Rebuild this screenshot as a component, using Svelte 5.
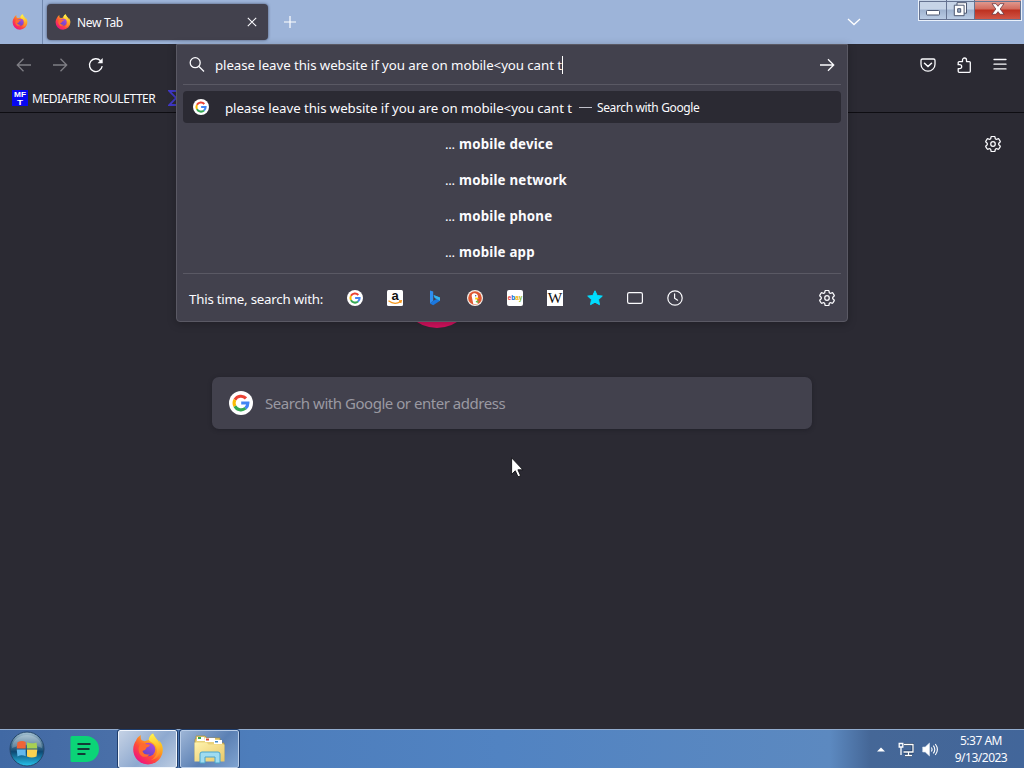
<script>
  let query = $state('please leave this website if you are on mobile<you cant t')

  const suggestions = ['mobile device', 'mobile network', 'mobile phone', 'mobile app']
  const engines = ['google', 'amazon', 'bing', 'duckduckgo', 'ebay', 'wikipedia', 'bookmarks', 'tabs', 'history']
</script>

{#snippet firefox(size)}
  <svg width={size} height={size} viewBox="0 0 32 32" aria-hidden="true">
    <path d="M29.8 11.4c-.8-1.8-2.1-3.4-3.5-4.2 1 1.800 1.300 2.700 1.400 3.900C25.900 6.800 22.900 5 21 .4c-2.800 1.500-4 4.300-4.200 6.500-1.500.1-2.800.6-4 1.300L9.700 7.300C8.700 6.200 8.500 3.700 8.900 2 5.800 3.700 4.700 6.100 4.100 7.600 2.500 9.700 1.200 13 1.200 16.500a14.800 14.800 0 0 0 29.600.2c0-2-.3-3.800-1-5.300Z" fill="url(#ff-flame)"/>
    <path d="M21 .4c2 5.300 7.200 7.600 7.800 14.200.5 6.400-4 11.800-9.800 12.600 6-3.700 7.400-9.700 4.600-14.400-1.900-3.300-6.200-4-6.900-6C16.900 4.500 18.200 1.900 21 .4Z" fill="url(#ff-yellow)"/>
    <circle cx="16.500" cy="16.500" r="6.800" fill="url(#ff-globe)"/>
    <path d="M8 11.500c2-1.600 4.600-1.500 6.400-.2 1.500.2 3 .2 3.500.6-.2 1.300-1.500 1.700-3 2.400-.7.500-.5 1.600-1.700 2.500-1 .7-2.500.5-2.700 1.400.7 2.800 4.500 4.200 7.200 2.700-1.700 3.400-6.700 4-9.200 1C6.200 19.200 6 14.500 8 11.500Z" fill="#ff6a30"/>
  </svg>
{/snippet}

{#snippet google(size)}
  <svg width={size} height={size} viewBox="0 0 24 24" aria-hidden="true">
    <circle cx="12" cy="12" r="12" fill="#fff"/>
    <g fill="none" stroke-width="3.100">
      <path d="M17 7.400A6.900 6.900 0 0 0 5.900 8.800" stroke="#ea4335"/>
      <path d="M5.900 8.800a6.900 6.900 0 0 0 0 6.400" stroke="#fbbc05"/>
      <path d="M5.900 15.200a6.900 6.900 0 0 0 10.600 2" stroke="#34a853"/>
      <path d="M16.500 17.200A6.700 6.700 0 0 0 18.900 12H12.200" stroke="#4285f4"/>
    </g>
  </svg>
{/snippet}

{#snippet gear()}
  <svg width="16" height="16" viewBox="2.500 2.500 19 19" fill="none" stroke="currentColor" stroke-width="1.500" stroke-linejoin="round" aria-hidden="true">
    <path d="M9.594 3.940c.09-.542.56-.94 1.110-.94h2.593c.55 0 1.020.398 1.110.94l.213 1.281c.063.374.313.686.645.87.074.04.147.083.22.127.325.196.72.257 1.075.124l1.217-.456a1.125 1.125 0 0 1 1.370.49l1.296 2.247a1.125 1.125 0 0 1-.26 1.431l-1.003.827c-.293.241-.438.613-.43.992a7.723 7.723 0 0 1 0 .255c-.008.378.137.75.43.991l1.004.827c.424.35.534.955.26 1.430l-1.298 2.247a1.125 1.125 0 0 1-1.369.491l-1.217-.456c-.355-.133-.75-.072-1.076.124a6.470 6.470 0 0 1-.22.128c-.331.183-.581.495-.644.869l-.213 1.281c-.09.543-.56.94-1.110.94h-2.594c-.55 0-1.019-.398-1.110-.94l-.213-1.281c-.062-.374-.312-.686-.644-.87a6.520 6.520 0 0 1-.22-.127c-.325-.196-.72-.257-1.076-.124l-1.217.456a1.125 1.125 0 0 1-1.369-.49l-1.297-2.247a1.125 1.125 0 0 1 .26-1.431l1.004-.827c.292-.24.437-.613.43-.991a6.932 6.932 0 0 1 0-.255c.007-.38-.138-.751-.43-.992l-1.004-.827a1.125 1.125 0 0 1-.26-1.430l1.297-2.247a1.125 1.125 0 0 1 1.370-.491l1.216.456c.356.133.751.072 1.076-.124.072-.044.146-.086.22-.128.332-.183.582-.495.644-.869l.214-1.280Z"/>
    <circle cx="12" cy="12" r="2.700"/>
  </svg>
{/snippet}

{#snippet engineIcon(name)}
  {#if name === 'google'}
    {@render google(16)}
  {:else}
    <svg width="16" height="16" viewBox="0 0 16 16" aria-hidden="true">
      {#if name === 'amazon'}
        <rect width="16" height="16" rx="1.500" fill="#fff"/>
        <text x="8" y="9.700" text-anchor="middle" class="amazon">a</text>
        <path d="M1.500 10.800c4 3 8.500 3 12 .8M12 11l2.300-.2-.6 2.200" fill="none" stroke="#f7981d" stroke-width="1.300"/>
      {:else if name === 'bing'}
        <path d="M3 .5 6.200 1.600v9.200L3 13.500Z" fill="#2f8ff0"/>
        <path d="m3 13.500 3.200-2.700 3.600-1.800-2-.9-1.200-3L13 7.400v3.400l-6.800 4.500Z" fill="#1a78e0"/>
        <path d="m6.600 5.100 6.400 2.300v3.400L9.800 9l-2-.9Z" fill="#35b5ee"/>
      {:else if name === 'duckduckgo'}
        <circle cx="8" cy="8" r="8" fill="#f4eee8"/>
        <circle cx="8" cy="8" r="6.800" fill="#de5833"/>
        <path d="M6.300 13.900 4.700 6.300C4.500 4 6 2.900 8 3.300c2.100.3 3 1.600 3 3.600l-1 2.600.8 4.400c-1.500.6-3 .6-4.500 0Z" fill="#fff"/>
        <path d="m8.200 7.600 4 .3-2.200 1.500H8.200Z" fill="#fdd20a"/>
        <path d="m8.800 11 2.600-.6v2.300l-2.500-.5Z" fill="#65bc46"/>
        <circle cx="8.700" cy="5.700" r=".7" fill="#2d4f8e"/>
      {:else if name === 'ebay'}
        <rect width="16" height="16" rx="2" fill="#fff"/>
        <text x=".8" y="9.800" textLength="14.500" lengthAdjust="spacingAndGlyphs" class="ebay"><tspan fill="#e53238">e</tspan><tspan fill="#0064d2">b</tspan><tspan fill="#f5af02">a</tspan><tspan fill="#86b817">y</tspan></text>
      {:else if name === 'wikipedia'}
        <rect width="16" height="16" fill="#fff"/>
        <text x="8" y="13" text-anchor="middle" textLength="14.500" lengthAdjust="spacingAndGlyphs" class="wiki">W</text>
      {:else if name === 'bookmarks'}
        <path d="m8 .8 2.200 4.700 5.100.6-3.800 3.500 1 5.100L8 12.200l-4.500 2.500 1-5.100L.7 6.100l5.100-.6Z" fill="#00ddff" stroke="#00ddff" stroke-linejoin="round"/>
      {:else if name === 'tabs'}
        <rect x=".6" y="2.600" width="14.800" height="10.800" rx="1.600" fill="none" stroke="#fbfbfe" stroke-width="1.200"/>
      {:else}
        <circle cx="8" cy="8" r="7.200" fill="none" stroke="#fbfbfe" stroke-width="1.200"/>
        <path d="M7.600 3.800v4.400l3 2" fill="none" stroke="#fbfbfe" stroke-width="1.200" stroke-linecap="round"/>
      {/if}
    </svg>
  {/if}
{/snippet}

<svg class="defs" width="0" height="0" aria-hidden="true">
  <defs>
    <linearGradient id="ff-flame" x1=".85" y1=".1" x2=".2" y2=".9">
      <stop offset="0" stop-color="#ffe226"/>
      <stop offset=".35" stop-color="#ff9a1f"/>
      <stop offset=".65" stop-color="#ff4b3a"/>
      <stop offset="1" stop-color="#f0147e"/>
    </linearGradient>
    <linearGradient id="ff-yellow" x1=".4" y1="0" x2=".5" y2="1">
      <stop offset="0" stop-color="#fff44f"/>
      <stop offset=".5" stop-color="#ffc02c"/>
      <stop offset="1" stop-color="#ff7a2b"/>
    </linearGradient>
    <linearGradient id="ff-globe" x1=".8" y1="0" x2=".2" y2="1">
      <stop offset="0" stop-color="#b14bdc"/>
      <stop offset="1" stop-color="#5a45c8"/>
    </linearGradient>
    <linearGradient id="orb" x1="0" y1="0" x2="0" y2="1">
      <stop offset="0" stop-color="#a6c3d4"/>
      <stop offset=".4" stop-color="#416d8b"/>
      <stop offset=".58" stop-color="#0d4873"/>
      <stop offset="1" stop-color="#27c5ee"/>
    </linearGradient>
    <linearGradient id="folder" x1="0" y1="0" x2="1" y2="1">
      <stop offset="0" stop-color="#fff3ad"/>
      <stop offset="1" stop-color="#e8c767"/>
    </linearGradient>
  </defs>
</svg>

<div class="desktop">
  <header class="titlebar">
    <div class="pinned">{@render firefox(16)}</div>
    <div class="tab">
      {@render firefox(16)}
      <span class="tab-title">New Tab</span>
      <svg width="10" height="10" viewBox="0 0 10 10" stroke="#fbfbfe" stroke-width="1.100" aria-hidden="true"><path d="m.8.8 8.400 8.400M9.200.8.8 9.200"/></svg>
    </div>
    <svg class="new-tab" width="12" height="12" viewBox="0 0 12 12" stroke="#fff" stroke-width="1.200" aria-hidden="true"><path d="M6 0v12M0 6h12"/></svg>
    <svg class="all-tabs" width="14" height="8" viewBox="0 0 14 8" fill="none" stroke="#fff" stroke-width="1.300" aria-hidden="true"><path d="m1 1 6 5.500L13 1"/></svg>
    <div class="window-controls">
      <button type="button" aria-label="Minimize">
        <svg width="14" height="6" viewBox="0 0 14 6"><rect x=".5" y=".5" width="13" height="4.500" rx=".8" fill="#fff" stroke="#4c5770"/></svg>
      </button>
      <button type="button" aria-label="Restore">
        <svg width="15" height="15" viewBox="0 0 15 15" fill="#fff" stroke="#4c5770"><path d="M4 .7h9.500v10.500H4Z"/><path d="M1.300 3.200h9.800v10.500H1.300Z"/><path d="M4.700 6.700h3v3.500h-3Z" fill="#9db0c9"/></svg>
      </button>
      <button type="button" class="close" aria-label="Close">
        <svg width="14" height="12" viewBox="0 0 14 12"><path d="M1 .7h4L7 3.300 9 .7h4L9.200 6l3.900 5.300H9L7 8.700l-2 2.600H.9L4.800 6Z" fill="#fff" stroke="#6b3942" stroke-width=".8"/></svg>
      </button>
    </div>
  </header>

  <nav class="toolbar">
    <svg class="dim" width="16" height="16" viewBox="0 0 16 16" aria-hidden="true"><path d="M15 8H1.500M7.500 1.800 1.300 8l6.200 6.200"/></svg>
    <svg class="dim" width="16" height="16" viewBox="0 0 16 16" aria-hidden="true"><path d="M1 8h13.500M8.500 1.800 14.700 8l-6.200 6.200"/></svg>
    <svg width="16" height="16" viewBox="0 0 16 16" aria-hidden="true"><path d="M14.200 9.200A6.400 6.400 0 1 1 12.600 3.800"/><path d="M14.700 1v5.200H9.500Z" fill="#fbfbfe" stroke="none"/></svg>
    <div class="toolbar-end">
      <svg width="16" height="16" viewBox="0 0 16 16" aria-hidden="true"><path d="M2.500 2h11A1.500 1.500 0 0 1 15 3.500v3.700a7 7 0 0 1-14 0V3.500A1.500 1.500 0 0 1 2.500 2Z"/><path d="M4.500 6.200 8 9.500l3.500-3.300" stroke-width="1.500" stroke-linecap="round"/></svg>
      <svg width="16" height="16" viewBox="0 0 16 16" aria-hidden="true"><path d="M2.200 7V5.600a1 1 0 0 1 1-1h3.300V3a2 2 0 0 1 4 0v1.600h2.800a1 1 0 0 1 1 1v8.700a1 1 0 0 1-1 1H3.200a1 1 0 0 1-1-1v-2.600h1.500a2 2 0 0 0 0-4H1.500" stroke-linejoin="round"/></svg>
      <svg width="16" height="16" viewBox="0 0 16 16" aria-hidden="true"><path d="M2 2.500h12M2 7.200h12M2 11.900h12" stroke-linecap="round"/></svg>
    </div>
  </nav>

  <div class="bookmarks">
    <svg width="16" height="16" viewBox="0 0 16 16" aria-hidden="true">
      <rect width="16" height="16" fill="#0808f0"/>
      <text x="8" y="6.800" text-anchor="middle" textLength="12" lengthAdjust="spacingAndGlyphs" class="mft">MF</text>
      <text x="8" y="15" text-anchor="middle" textLength="6" lengthAdjust="spacingAndGlyphs" class="mft">T</text>
    </svg>
    <span>MEDIAFIRE ROULETTER</span>
    <svg class="sigma" width="16" height="16" viewBox="0 0 16 16" aria-hidden="true"><path d="M15 1H1.200l7 7-7 7H15" fill="none" stroke="#4038c8" stroke-width="1.800"/></svg>
  </div>

  <main class="newtab">
    <div class="settings">{@render gear()}</div>
    <div class="logo"></div>
    <div class="search-box">
      {@render google(24)}
      <span>Search with Google or enter address</span>
    </div>
  </main>

  <section class="urlbar">
    <div class="url-input">
      <svg width="16" height="16" viewBox="0 0 16 16" fill="none" stroke="#fbfbfe" stroke-width="1.300" aria-hidden="true"><circle cx="6.200" cy="5.700" r="5"/><path d="m10 9.500 5 5"/></svg>
      <span class="query">{query}</span><span class="caret"></span>
      <svg class="go" width="16" height="16" viewBox="0 0 16 16" fill="none" stroke="#fbfbfe" stroke-width="1.300" aria-hidden="true"><path d="M1 8h13.500M9 2.300 14.700 8 9 13.700"/></svg>
    </div>
    <div class="results">
      <div class="result selected">
        {@render google(16)}
        <span class="query">{query}</span>
        <span class="dash"></span>
        <span class="action">Search with Google</span>
      </div>
      {#each suggestions as suggestion}
        <div class="result tail"><span class="dots">...</span><b>{suggestion}</b></div>
      {/each}
    </div>
    <div class="one-offs">
      <span class="one-offs-label">This time, search with:</span>
      <div class="engines">
        {#each engines as engine}
          {@render engineIcon(engine)}
        {/each}
      </div>
      {@render gear()}
    </div>
  </section>

  <footer class="taskbar">
    <svg class="start" width="36" height="36" viewBox="0 0 36 36" aria-hidden="true">
      <circle cx="18" cy="18" r="17" fill="url(#orb)" stroke="#24466a"/>
      <path d="M3 17a15 13 0 0 1 30 0c-9-4-20-4-30 0Z" fill="#fff" opacity=".22"/>
      <path d="M8.500 11.300c3-1.500 5.500-1.600 8.200-.4v6.500H7.700Z" fill="#ef6337"/>
      <path d="M18 11.300c3 1.300 6 1.300 9.500.1l.8 6.100H18Z" fill="#a8d052"/>
      <path d="M7.700 18.600h9v6.700c-2.700-1.300-5.200-1.300-8.200.1Z" fill="#62b8ec"/>
      <path d="M18 18.600h10.300l-.8 7c-3.500 1.300-6.500 1.100-9.500-.1Z" fill="#fcd150"/>
    </svg>
    <svg class="notes" width="30" height="28" viewBox="0 0 30 28" aria-hidden="true">
      <path d="M2 1h14a13 13 0 0 1 0 26H2a1.500 1.500 0 0 1-1.500-1.500v-23A1.500 1.500 0 0 1 2 1Z" fill="#0bd477"/>
      <path d="M7.500 9h13M7.500 14h12M7.500 19h8" stroke="#123b36" stroke-width="1.900"/>
    </svg>
    <div class="task active">{@render firefox(32)}</div>
    <div class="task">
      <svg width="34" height="32" viewBox="0 0 34 32" aria-hidden="true">
        <path d="M3 6V3h9l2 2h13v5h4v17H2V6Z" fill="#e9d27a" stroke="#a98e3e" stroke-width=".7"/>
        <path d="M4 4h7l1 4H4Z" fill="#fff"/>
        <path d="M5 4h3v2H5Z" fill="#3ba84d"/>
        <path d="M12 5h10v4H12Z" fill="#fff"/>
        <path d="M13 5.500h3v2h-3Z" fill="#d94a35"/>
        <path d="M21 7h8v4h-8Z" fill="#fff"/>
        <path d="M22 8h3v1.500h-3Z" fill="#448ac6"/>
        <path d="M1.500 9.500h12l2 2h16v17h-30Z" fill="url(#folder)"/>
        <path d="M7 30V21a2 2 0 0 1 2-2h16a2 2 0 0 1 2 2v9h-5v-6H12v6Z" fill="#9fdcf0" stroke="#4aa4cc"/>
      </svg>
    </div>
    <div class="tray">
      <svg width="8" height="5" viewBox="0 0 8 5" aria-hidden="true"><path d="m0 4.500 4-4 4 4Z" fill="#fff"/></svg>
      <svg class="network" width="16" height="15" viewBox="0 0 16 15" fill="none" aria-hidden="true">
        <path d="M6 2.500h9v7.500H5.500M10.500 10v3M7 13.500h7" stroke="#203c60" stroke-width="3"/>
        <path d="M6 2.500h9v7.500H5.500M10.500 10v3M7 13.500h7" stroke="#fff" stroke-width="1.300"/>
        <path d="M1.200 1.500h3.600V5H1.200ZM3 5v8" stroke="#fff" stroke-width="1.300"/>
      </svg>
      <svg class="volume" width="16" height="15" viewBox="0 0 16 15" fill="none" aria-hidden="true">
        <path d="M.7 5h2.500L7.500 1v13L3.200 10H.7Z" fill="#fff" stroke="#d5dfec" stroke-width=".6"/>
        <path d="M9.300 5.500q1.500 2 0 4M11.300 3.700q3 3.800 0 7.600M13.300 2q4.200 5.500 0 11" stroke="#fff" stroke-width="1.100"/>
      </svg>
      <div class="clock"><span>5:37 AM</span><span>9/13/2023</span></div>
    </div>
  </footer>

  <svg class="pointer" width="13" height="21" viewBox="0 0 13 21" aria-hidden="true"><path d="M.6.800v16.500l3.700-3.500 2.700 6 2.600-1.100-2.700-5.900h5Z" fill="#fff" stroke="#101014" stroke-width=".9"/></svg>
</div>

<style>
  :global(body) {
    background: #2b2a33;
    overflow: hidden;
  }

  .defs {
    position: absolute;
  }

  .desktop {
    position: relative;
    display: flex;
    flex-direction: column;
    width: 1024px;
    height: 768px;
    overflow: hidden;
    background: #2b2a33;
    color: #fbfbfe;
    font-family: 'Noto Sans', 'Open Sans', sans-serif;
    font-size: 12px;
    white-space: nowrap;
  }

  svg {
    display: block;
    flex: none;
  }

  .titlebar {
    display: flex;
    align-items: center;
    height: 44px;
    background: #9db4d9;
  }

  .pinned {
    display: flex;
    align-items: center;
    box-sizing: border-box;
    width: 43px;
    height: 44px;
    padding-left: 12px;
    border-right: 1px solid #7188ad;
  }

  .tab {
    display: flex;
    align-items: center;
    box-sizing: border-box;
    width: 221px;
    height: 36px;
    margin-left: 4px;
    padding: 0 11px 0 8px;
    border-radius: 4px;
    background: #42414d;
    box-shadow: 0 0 3px rgba(30, 35, 60, 0.7);
  }

  .tab-title {
    flex: 1;
    margin-left: 6px;
    letter-spacing: -0.3px;
  }

  .new-tab {
    margin-left: 16px;
  }

  .all-tabs {
    margin-left: auto;
    margin-right: 57px;
  }

  .window-controls {
    display: flex;
    align-self: flex-start;
    box-sizing: border-box;
    width: 104px;
    height: 21px;
    margin-right: 2px;
    border: solid #eaf1fb;
    border-width: 0 1px 1px;
    outline: 1px solid #657391;
    outline-offset: -2px;
  }

  .window-controls button {
    display: flex;
    align-items: center;
    justify-content: center;
    width: 28px;
    padding: 0 0 2px;
    border: 0;
    border-right: 1px solid #657391;
    background: linear-gradient(#c6d4e7 0 45%, #9fb3d0 50%, #bccee6);
  }

  .window-controls button:first-child svg {
    margin-top: 7px;
  }

  .window-controls .close {
    flex: 1;
    border-right: 0;
    background: linear-gradient(#e3a49b 0, #d26b5d 45%, #bd3020 50%, #d2594a);
  }

  .toolbar {
    display: flex;
    align-items: center;
    gap: 20px;
    height: 41px;
    padding: 0 16px;
  }

  .toolbar svg {
    fill: none;
    stroke: #fbfbfe;
    stroke-width: 1.300;
  }

  .toolbar .dim {
    opacity: 0.4;
  }

  .toolbar-end {
    display: flex;
    gap: 20px;
    margin-left: auto;
  }

  .bookmarks {
    display: flex;
    align-items: center;
    box-sizing: border-box;
    height: 28px;
    padding: 0 0 1px 12px;
    border-bottom: 1px solid #0e0d12;
  }

  .bookmarks span {
    width: 125px;
    margin-left: 4px;
    letter-spacing: -0.45px;
  }

  .sigma {
    margin-left: 11px;
  }

  .mft {
    fill: #fff;
    font: bold 7.500px 'Liberation Sans', sans-serif;
  }

  .newtab {
    flex: 1;
    display: flex;
    flex-direction: column;
    align-items: center;
  }

  .settings {
    align-self: flex-end;
    margin: 23px 23px 0 0;
  }

  .logo {
    width: 76px;
    height: 76px;
    margin: 100px 151px 0 0;
    border-radius: 50%;
    background: #d3125e;
  }

  .search-box {
    display: flex;
    align-items: center;
    gap: 12px;
    box-sizing: border-box;
    width: 600px;
    height: 52px;
    margin-top: 49px;
    padding-left: 17px;
    border-radius: 7px;
    background: #42414d;
    color: #9a99a2;
    font-size: 15px;
    box-shadow: 0 1px 4px rgba(20, 20, 28, 0.4);
  }

  .search-box span {
    letter-spacing: -0.47px;
  }

  .urlbar {
    position: absolute;
    top: 44px;
    left: 176px;
    box-sizing: border-box;
    width: 672px;
    height: 278px;
    padding: 0 6px;
    border: 1px solid #5a5964;
    border-radius: 0 0 4px 4px;
    background: #42414d;
    box-shadow: 0 2px 8px rgba(0, 0, 0, 0.25);
  }

  .url-input {
    display: flex;
    align-items: center;
    height: 39px;
    padding: 0 6px;
    border-bottom: 1px solid #5a5964;
  }

  .url-input .query {
    margin-left: 10px;
  }

  .query {
    font-size: 13.300px;
    letter-spacing: -0.08px;
  }

  .caret {
    width: 1px;
    height: 18px;
    background: #fff;
  }

  .go {
    margin-left: auto;
  }

  .results {
    padding-top: 6px;
  }

  .result {
    display: flex;
    align-items: center;
    box-sizing: border-box;
    height: 36px;
  }

  .result.selected {
    height: 32px;
    margin-bottom: 3px;
    padding-left: 10px;
    border-radius: 4px;
    background: #2b2a33;
  }

  .selected .query {
    margin-left: 16px;
    padding-top: 2px;
  }

  .dash {
    width: 13px;
    height: 1px;
    margin: 0 5px 0 7px;
    background: #bfbfc9;
  }

  .action {
    letter-spacing: -0.36px;
  }

  .tail {
    padding-left: 262px;
    font-size: 13.300px;
  }

  .tail b {
    letter-spacing: 0.2px;
  }

  .dots {
    width: 14px;
    letter-spacing: -0.3px;
  }

  .one-offs {
    display: flex;
    align-items: center;
    height: 47px;
    margin-top: 3px;
    padding: 0 6px;
    border-top: 1px solid #5a5964;
  }

  .one-offs-label {
    width: 134px;
    padding-top: 2px;
    font-size: 13.300px;
    letter-spacing: -0.22px;
  }

  .engines {
    display: flex;
    flex: 1;
    gap: 24px;
    margin-left: 24px;
  }

  .amazon {
    fill: #111;
    font: bold 13px/1 'Liberation Sans', sans-serif;
  }

  .ebay {
    font: bold 7px 'Liberation Sans', sans-serif;
  }

  .wiki {
    fill: #111;
    font: 14px 'Liberation Serif', serif;
  }

  .taskbar {
    display: flex;
    align-items: center;
    box-sizing: border-box;
    height: 39px;
    border-top: 1px solid #91acd0;
    background: linear-gradient(90deg, #4169a4 0, #496fa8 110px, #4d7dbb 250px, #5183c2 500px, #5c89c0 830px, #456797 870px, #42669a 100%);
  }

  .start {
    margin-left: 9px;
  }

  .notes {
    margin: 0 18px 0 25px;
  }

  .task {
    display: flex;
    align-items: center;
    justify-content: center;
    box-sizing: border-box;
    width: 59px;
    height: 38px;
    margin-right: 3px;
    border: 1px solid #b9cde8;
    border-radius: 2px;
    outline: 1px solid #1f3d6b;
    background: linear-gradient(135deg, #9db5d6, #5b80b4 55%, #7fa3d0);
  }

  .task.active {
    border-color: #f0f5fc;
    background: linear-gradient(135deg, #c5d2e5, #8ea9cf 55%, #bccce2);
  }

  .tray {
    display: flex;
    align-items: center;
    margin-left: auto;
  }

  .network {
    margin-left: 13px;
  }

  .volume {
    margin-left: 8px;
  }

  .clock {
    display: flex;
    flex-direction: column;
    align-items: center;
    width: 86px;
    line-height: 17px;
    letter-spacing: -0.5px;
  }

  .pointer {
    position: absolute;
    top: 457px;
    left: 511px;
  }
</style>
